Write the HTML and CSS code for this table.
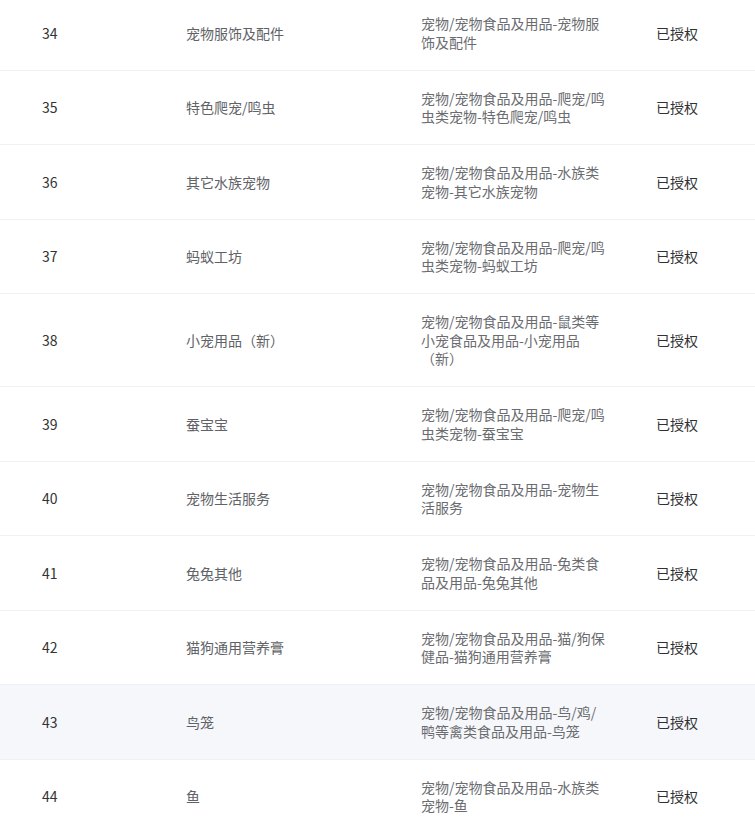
FILE: index.html
```html
<!DOCTYPE html>
<html lang="zh-CN">
<head>
<meta charset="utf-8">
<title>类目授权</title>
<link rel="stylesheet" href="styles.css">
</head>
<body>
<div class="table-wrap">
<table class="cat-table">
<colgroup>
<col class="c-idx">
<col class="c-name">
<col class="c-path">
<col class="c-status">
</colgroup>
<tbody>
<tr><td class="idx">34</td><td class="name">宠物服饰及配件</td><td class="path">宠物/宠物食品及用品-宠物服饰及配件</td><td class="status">已授权</td></tr>
<tr><td class="idx">35</td><td class="name">特色爬宠/鸣虫</td><td class="path">宠物/宠物食品及用品-爬宠/鸣虫类宠物-特色爬宠/鸣虫</td><td class="status">已授权</td></tr>
<tr><td class="idx">36</td><td class="name">其它水族宠物</td><td class="path">宠物/宠物食品及用品-水族类宠物-其它水族宠物</td><td class="status">已授权</td></tr>
<tr><td class="idx">37</td><td class="name">蚂蚁工坊</td><td class="path">宠物/宠物食品及用品-爬宠/鸣虫类宠物-蚂蚁工坊</td><td class="status">已授权</td></tr>
<tr><td class="idx">38</td><td class="name">小宠用品（新）</td><td class="path">宠物/宠物食品及用品-鼠类等小宠食品及用品-小宠用品（新）</td><td class="status">已授权</td></tr>
<tr><td class="idx">39</td><td class="name">蚕宝宝</td><td class="path">宠物/宠物食品及用品-爬宠/鸣虫类宠物-蚕宝宝</td><td class="status">已授权</td></tr>
<tr><td class="idx">40</td><td class="name">宠物生活服务</td><td class="path">宠物/宠物食品及用品-宠物生活服务</td><td class="status">已授权</td></tr>
<tr><td class="idx">41</td><td class="name">兔兔其他</td><td class="path">宠物/宠物食品及用品-兔类食品及用品-兔兔其他</td><td class="status">已授权</td></tr>
<tr><td class="idx">42</td><td class="name">猫狗通用营养膏</td><td class="path">宠物/宠物食品及用品-猫/狗保健品-猫狗通用营养膏</td><td class="status">已授权</td></tr>
<tr class="hover"><td class="idx">43</td><td class="name">鸟笼</td><td class="path">宠物/宠物食品及用品-鸟/鸡/鸭等禽类食品及用品-鸟笼</td><td class="status">已授权</td></tr>
<tr><td class="idx">44</td><td class="name">鱼</td><td class="path">宠物/宠物食品及用品-水族类宠物-鱼</td><td class="status">已授权</td></tr>
</tbody>
</table>
</div>
</body>
</html>
```
FILE: styles.css
```css
html, body {
  margin: 0;
  padding: 0;
  background: #ffffff;
}

body {
  font-family: "Noto Sans CJK SC", "Noto Sans", sans-serif;
  font-size: 14px;
  color: #606266;
  overflow: hidden;
}

.table-wrap {
  margin-top: -3.8px;
}

.cat-table {
  width: 100%;
  border-collapse: collapse;
  table-layout: fixed;
}

.c-idx { width: 176px; }
.c-name { width: 235px; }
.c-path { width: 235px; }

.cat-table td {
  padding: 18.25px 10px;
  line-height: 18.5px;
  vertical-align: middle;
  border-bottom: 1px solid #f0f1f4;
  text-align: left;
  word-break: normal;
}

.cat-table td.idx {
  padding-left: 42px;
  color: #333333;
}

.cat-table td.name {
  color: #606266;
}

.cat-table td.path {
  padding-right: 39px;
  color: #6a6c70;
}

.cat-table td.status {
  color: #303133;
}

.cat-table tr.hover td {
  background: #f6f7fa;
}
```
